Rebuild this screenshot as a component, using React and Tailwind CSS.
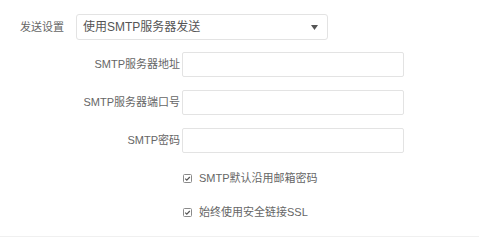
const font = { fontFamily: '"Liberation Sans", "Noto Sans CJK SC", sans-serif' }

function Check() {
  return (
    <svg width="9" height="9" viewBox="0 0 9 9" className="shrink-0">
      <rect x="0.5" y="0.5" width="8" height="8" rx="1" fill="#fff" stroke="#8a8a8a" />
      <path d="M2.2 4.6 L3.8 6.1 L6.8 3" fill="none" stroke="#555" strokeWidth="1.2" />
    </svg>
  )
}

function InputRow({ label }) {
  return (
    <div className="flex items-center">
      <label className="w-[182px] pr-[2px] text-right text-[11px] text-[#666]">{label}</label>
      <div className="w-[222px] h-[25px] border border-[#e3e3e3] rounded-[2px] bg-white" />
    </div>
  )
}

function CheckRow({ label }) {
  return (
    <div className="flex items-center h-[20px] pl-[183px] gap-[7px]">
      <Check />
      <span className="text-[11px] text-[#666]">{label}</span>
    </div>
  )
}

export default function App() {
  return (
    <div className="w-[479px] h-[241px] bg-white" style={font}>
      <div className="flex flex-col pt-[14px] pb-[14px] border-b border-[#f0f0f0]">
        <div className="flex items-center pl-[20px]">
          <label className="w-[56px] text-[11px] text-[#666]">发送设置</label>
          <div className="w-[252px] h-[26px] border border-[#e3e3e3] rounded-[3px] flex items-center justify-between pl-[6px] pr-[9px]">
            <span className="text-[12px] text-[#555]">使用SMTP服务器发送</span>
            <svg width="7" height="5" viewBox="0 0 7 5">
              <path d="M0 0 H7 L3.5 5 Z" fill="#555" />
            </svg>
          </div>
        </div>
        <div className="flex flex-col gap-[13px] mt-[12px]">
          <InputRow label="SMTP服务器地址" />
          <InputRow label="SMTP服务器端口号" />
          <InputRow label="SMTP密码" />
        </div>
        <div className="flex flex-col gap-[14px] mt-[15px]">
          <CheckRow label="SMTP默认沿用邮箱密码" />
          <CheckRow label="始终使用安全链接SSL" />
        </div>
      </div>
    </div>
  )
}
